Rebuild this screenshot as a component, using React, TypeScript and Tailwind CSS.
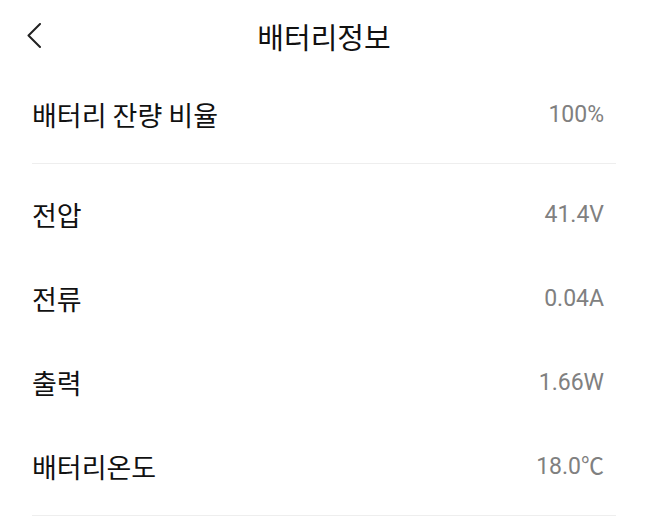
import React from "react";

const rows: { label: string; value: string }[] = [
  { label: "전압", value: "41.4V" },
  { label: "전류", value: "0.04A" },
  { label: "출력", value: "1.66W" },
  { label: "배터리온도", value: "18.0℃" },
];

function Row({ label, value }: { label: string; value: string }) {
  return (
    <div className="flex h-[84px] items-center justify-between">
      <span className="text-[27px] leading-none text-[#111]">{label}</span>
      <span className="pr-[12px] text-[23px] leading-none text-[#808080] [font-family:Roboto,'Noto_Sans_CJK_KR',sans-serif]">
        {value}
      </span>
    </div>
  );
}

export default function App() {
  return (
    <div className="h-[528px] w-[648px] bg-white [font-family:'Noto_Sans_CJK_KR',sans-serif]">
      <div className="relative flex h-[72px] items-center justify-center">
        <svg
          className="absolute left-[27px] top-[23px]"
          width="16"
          height="26"
          viewBox="0 0 16 26"
          fill="none"
          stroke="#222"
          strokeWidth="2"
          strokeLinecap="round"
          strokeLinejoin="round"
        >
          <path d="M13 1 L1.5 12.5 L13 24" />
        </svg>
        <h1 className="text-[29px] font-normal leading-none text-[#111]">배터리정보</h1>
      </div>
      <div className="mx-[32px]">
        <Row label="배터리 잔량 비율" value="100%" />
        <div className="mt-[7px] h-px bg-[#eeeeee]" />
        <div className="mt-[8px]">
          {rows.map((r) => (
            <Row key={r.label} label={r.label} value={r.value} />
          ))}
        </div>
        <div className="mt-[7px] h-px bg-[#eeeeee]" />
      </div>
    </div>
  );
}
